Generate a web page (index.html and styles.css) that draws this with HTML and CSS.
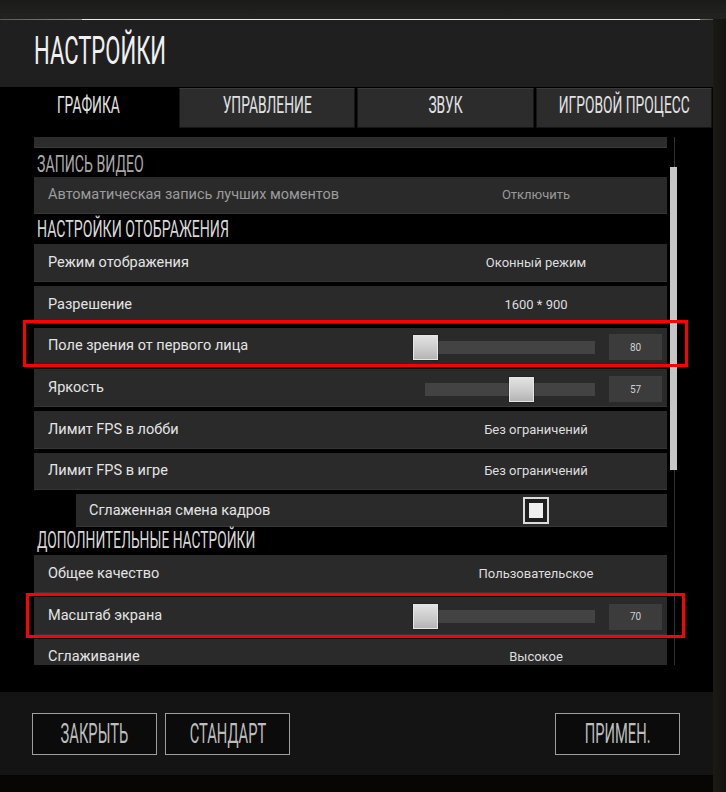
FILE: index.html
```html
<!DOCTYPE html>
<html lang="ru">
<head>
<meta charset="utf-8">
<title>Настройки</title>
<link rel="stylesheet" href="styles.css">
</head>
<body>
<div class="screen">
  <div class="panel">
    <div class="topline"></div>
    <header class="head">
      <h1 class="title"><span class="cond">НАСТРОЙКИ</span></h1>
    </header>
    <nav class="tabs">
      <div class="tab active"><span class="cond">ГРАФИКА</span></div>
      <div class="tab"><span class="cond">УПРАВЛЕНИЕ</span></div>
      <div class="tab"><span class="cond">ЗВУК</span></div>
      <div class="tab"><span class="cond">ИГРОВОЙ ПРОЦЕСС</span></div>
    </nav>
    <main class="content">
      <div class="viewport">
        <div class="list">
          <div class="row partial"></div>
          <div class="section dim s1"><span class="cond">ЗАПИСЬ ВИДЕО</span></div>
          <div class="row disabled"><span class="label">Автоматическая запись лучших моментов</span><span class="value">Отключить</span></div>
          <div class="section s2"><span class="cond">НАСТРОЙКИ ОТОБРАЖЕНИЯ</span></div>
          <div class="row"><span class="label">Режим отображения</span><span class="value">Оконный режим</span></div>
          <div class="row"><span class="label">Разрешение</span><span class="value">1600 * 900</span></div>
          <div class="row"><span class="label">Поле зрения от первого лица</span>
            <div class="slider"><div class="track"><div class="knob" style="left:-12px"></div></div><div class="num">80</div></div>
          </div>
          <div class="row"><span class="label">Яркость</span>
            <div class="slider"><div class="track"><div class="knob" style="left:84px"></div></div><div class="num">57</div></div>
          </div>
          <div class="row"><span class="label">Лимит FPS в лобби</span><span class="value">Без ограничений</span></div>
          <div class="row"><span class="label">Лимит FPS в игре</span><span class="value">Без ограничений</span></div>
          <div class="row sub"><span class="label">Сглаженная смена кадров</span><span class="value"><span class="check"><span class="check-fill"></span></span></span></div>
          <div class="section s3"><span class="cond">ДОПОЛНИТЕЛЬНЫЕ НАСТРОЙКИ</span></div>
          <div class="row"><span class="label">Общее качество</span><span class="value">Пользовательское</span></div>
          <div class="row"><span class="label">Масштаб экрана</span>
            <div class="slider"><div class="track"><div class="knob" style="left:-12px"></div></div><div class="num">70</div></div>
          </div>
          <div class="row"><span class="label">Сглаживание</span><span class="value">Высокое</span></div>
        </div>
        <div class="scrollbar"><div class="thumb"></div></div>
      </div>
    </main>
    <footer class="foot">
      <button class="btn"><span class="cond">ЗАКРЫТЬ</span></button>
      <button class="btn"><span class="cond">СТАНДАРТ</span></button>
      <span class="spacer"></span>
      <button class="btn"><span class="cond">ПРИМЕН.</span></button>
    </footer>
  </div>
  <div class="mark mark1"></div>
  <div class="mark mark2"></div>
</div>
</body>
</html>
```

FILE: styles.css
```css
* { box-sizing: border-box; }
html, body { margin: 0; padding: 0; }
body {
  width: 726px;
  height: 792px;
  overflow: hidden;
  background: #060504;
  font-family: Roboto, "Noto Sans", "DejaVu Sans", sans-serif;
}
.screen {
  position: relative;
  width: 726px;
  height: 792px;
  background:
    linear-gradient(180deg, #1b1b19 0px, #222220 19px, transparent 19px),
    linear-gradient(90deg, transparent 713px, #1c1a14 713px, #13120e 726px),
    #070605;
}
.panel {
  width: 713px;
  padding-top: 19px;
}
.topline {
  height: 1px;
  background: linear-gradient(90deg, #5a5a5a 0px, #8a8a8a 82px, #e8e8e8 82px, #e8e8e8 700px, #777 700px, #555 713px);
}
.cond {
  display: inline-block;
  transform: scaleX(0.57);
  white-space: nowrap;
}
.head {
  height: 67px;
  background: #1f1f1f;
  padding: 12px 0 0 34px;
}
.title {
  margin: 0;
  font-size: 39px;
  line-height: 39px;
  font-weight: 400;
  color: #f0f0f0;
}
.title .cond { transform-origin: left center; transform: scaleX(0.565); }
.tabs {
  height: 41px;
  background: #000;
  padding-top: 1px;
  display: grid;
  grid-template-columns: repeat(4, minmax(0, 1fr));
  gap: 2px;
  width: 712px;
}
.tab {
  min-width: 0;
  display: flex;
  align-items: center;
  justify-content: center;
  padding-bottom: 5px;
  background: #2c2c2c;
  border: 1px solid #161616;
  border-top-color: #3a3a3a;
  color: #e2e2e2;
  font-size: 23px;
  line-height: 23px;
}
.tab .cond { transform: scaleX(0.6); }
.tab.active { background: #000; border-color: #000; }
.content {
  height: 564px;
  background: #000;
  padding: 9px 0 0 34px;
}
.viewport {
  height: 528px;
  display: flex;
  overflow: hidden;
}
.list {
  width: 633px;
  display: flex;
  flex-direction: column;
}
.row {
  flex: none;
  height: 37.67px;
  background: #2a2a2a;
  border-bottom: 1px solid #363636;
  display: grid;
  grid-template-columns: 1fr 262px;
  align-items: center;
}
.row + .row { margin-top: 4px; }
.row.partial { margin-top: -27px; background: #2c2c2c; border-bottom-color: #3a3a3a; }
.row.sub { margin-left: 42px; height: 33px; }
.row.sub .label { padding-left: 13px; }
.label {
  padding-left: 14px;
  font-size: 14.5px;
  color: #e4e4e4;
  white-space: nowrap;
}
.value {
  text-align: center;
  font-size: 13px;
  color: #dedede;
  display: flex;
  justify-content: center;
  align-items: center;
}
.disabled .label { color: #9c9c9c; }
.disabled .value { color: #9a9a9a; }
.section {
  flex: none;
  display: flex;
  align-items: flex-end;
  padding-left: 3px;
  font-size: 23px;
  line-height: 23px;
  color: #d8d8d8;
}
.section .cond { transform-origin: left center; transform: scaleX(0.615); }
.section.dim { color: #a8a8a8; }
.s1 { height: 29px; padding-bottom: 1px; }
.s2 { height: 30px; padding-bottom: 3px; }
.s3 { height: 28px; padding-bottom: 3px; }
.s3 .cond { transform: scaleX(0.6); }
.slider {
  display: flex;
  align-items: center;
  padding: 3px 0 0 20px;
}
.track {
  position: relative;
  width: 170px;
  height: 13px;
  background: #434343;
}
.knob {
  position: absolute;
  top: -6px;
  width: 25px;
  height: 25px;
  border: 1px solid #e6e6e6;
  background: linear-gradient(180deg, #e2e2e2 0%, #c9c9c9 60%, #b4b4b4 100%);
  box-shadow: 0 0 1px #000;
}
.num {
  margin-left: 14px;
  width: 53px;
  height: 26px;
  background: #3c3c3c;
  color: #d0d0d0;
  font-size: 10px;
  display: flex;
  align-items: center;
  justify-content: center;
}
.check {
  width: 26px;
  height: 27px;
  border: 2px solid #dcdcdc;
  background: #1f1f1f;
  padding: 4px;
  display: flex;
}
.check-fill { flex: 1; background: #efefef; }
.scrollbar {
  margin-left: 3px;
  width: 7px;
  padding-top: 30px;
  background: linear-gradient(90deg, transparent 4px, #333 4px, #333 5px, transparent 5px);
}
.thumb {
  height: 303px;
  background: #c6c6c6;
}
.foot {
  height: 83px;
  background: #141414;
  display: flex;
  align-items: flex-start;
  padding: 21px 33px 0 32px;
  gap: 8px;
}
.spacer { flex: 1; }
.btn {
  width: 125px;
  height: 42px;
  background: #0b0b0b;
  border: 1px solid #9e9e9e;
  color: #bdbdbd;
  font-family: Roboto, "Noto Sans", sans-serif;
  font-size: 28px;
  line-height: 28px;
  padding: 0;
  display: flex;
  align-items: center;
  justify-content: center;
}
.btn .cond { transform: scaleX(0.525); }
.mark {
  position: absolute;
  border: 3px solid #ff0000;
  pointer-events: none;
}
.mark1 { left: 23px; top: 320px; width: 665px; height: 47px; }
.mark2 { left: 26px; top: 593px; width: 659px; height: 45px; }
```
